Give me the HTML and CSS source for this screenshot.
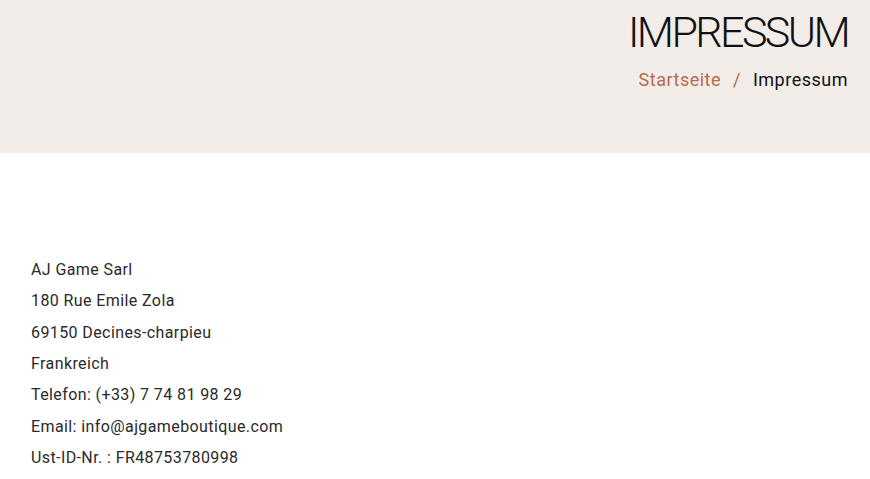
FILE: index.html
```html
<!DOCTYPE html>
<html lang="de">
<head>
  <meta charset="UTF-8">
  <title>Impressum</title>
  <link rel="stylesheet" href="styles.css">
</head>
<body>
  <header class="page-title">
    <h1>IMPRESSUM</h1>
    <nav class="breadcrumb">
      <a href="#">Startseite</a>
      <span class="sep">/</span>
      <span class="current">Impressum</span>
    </nav>
  </header>

  <main class="content">
    <p>AJ Game Sarl</p>
    <p>180 Rue Emile Zola</p>
    <p>69150 Decines-charpieu</p>
    <p>Frankreich</p>
    <p>Telefon: (+33) 7 74 81 98 29</p>
    <p>Email: info@ajgameboutique.com</p>
    <p>Ust-ID-Nr. : FR48753780998</p>
  </main>
</body>
</html>
```

FILE: styles.css
```css
body {
  margin: 0;
  font-family: Roboto, "Liberation Sans", sans-serif;
  color: #222;
  background-color: #fff;
}

.page-title {
  background-color: #f2ede9;
  height: 153px;
  box-sizing: border-box;
  padding: 6px 22px 0 0;
  text-align: right;
}

.page-title h1 {
  margin: 0;
  font-size: 43px;
  font-weight: 300;
  line-height: 52px;
  letter-spacing: -2.6px;
  color: #111;
}

.breadcrumb {
  margin-top: 11px;
  font-size: 18px;
  line-height: 22px;
  letter-spacing: 0.5px;
}

.breadcrumb a {
  color: #b9694a;
  text-decoration: none;
}

.breadcrumb .sep {
  color: #b9694a;
  margin: 0 7px;
}

.breadcrumb .current {
  color: #111;
}

.content {
  padding: 101px 31px 0;
}

.content p {
  margin: 0;
  font-size: 16px;
  line-height: 31.33px;
  font-weight: 400;
  letter-spacing: 0.4px;
  color: #2a2a2a;
}
```
